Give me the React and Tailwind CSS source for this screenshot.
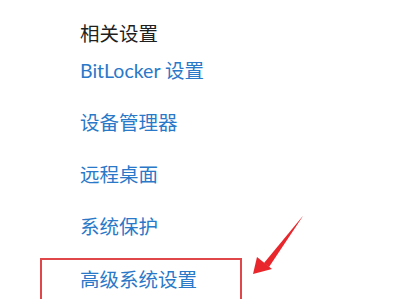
import React from "react";

const links = ["BitLocker 设置", "设备管理器", "远程桌面", "系统保护"];

const Arrow = () => (
  <svg
    className="absolute left-[240px] top-[205px]"
    width="75"
    height="80"
    viewBox="0 0 75 80"
  >
    {/* shaft, tapering toward the tail */}
    <polygon points="63,11 62,12 24,58 29,62" fill="#e8262b" />
    {/* head */}
    <polygon points="13,69 17,52 32,64" fill="#e8262b" />
  </svg>
);

const App = () => {
  return (
    <div
      className="relative h-[299px] w-[400px] overflow-hidden bg-white"
      style={{ fontFamily: 'Lato, "Noto Sans CJK SC", sans-serif' }}
    >
      <div className="flex flex-col pt-[24px] pl-[80px]">
        <h3 className="h-[20px] text-[19.5px] leading-[20px] font-normal text-[#1f1f1f]">
          相关设置
        </h3>
        <ul className="mt-[1px] flex flex-col">
          {links.map((label) => (
            <li
              key={label}
              className="flex h-[52px] items-center text-[19.5px] text-[#2a78c8]"
            >
              {label}
            </li>
          ))}
        </ul>
        <div className="-ml-[40px] mt-[5px] flex h-[60px] w-[202px] items-start border-2 border-[#e0474a] pl-[38px] pt-[9px]">
          <span className="text-[19.5px] leading-[22px] text-[#2a78c8]">
            高级系统设置
          </span>
        </div>
      </div>
      <Arrow />
    </div>
  );
};

export default App;
